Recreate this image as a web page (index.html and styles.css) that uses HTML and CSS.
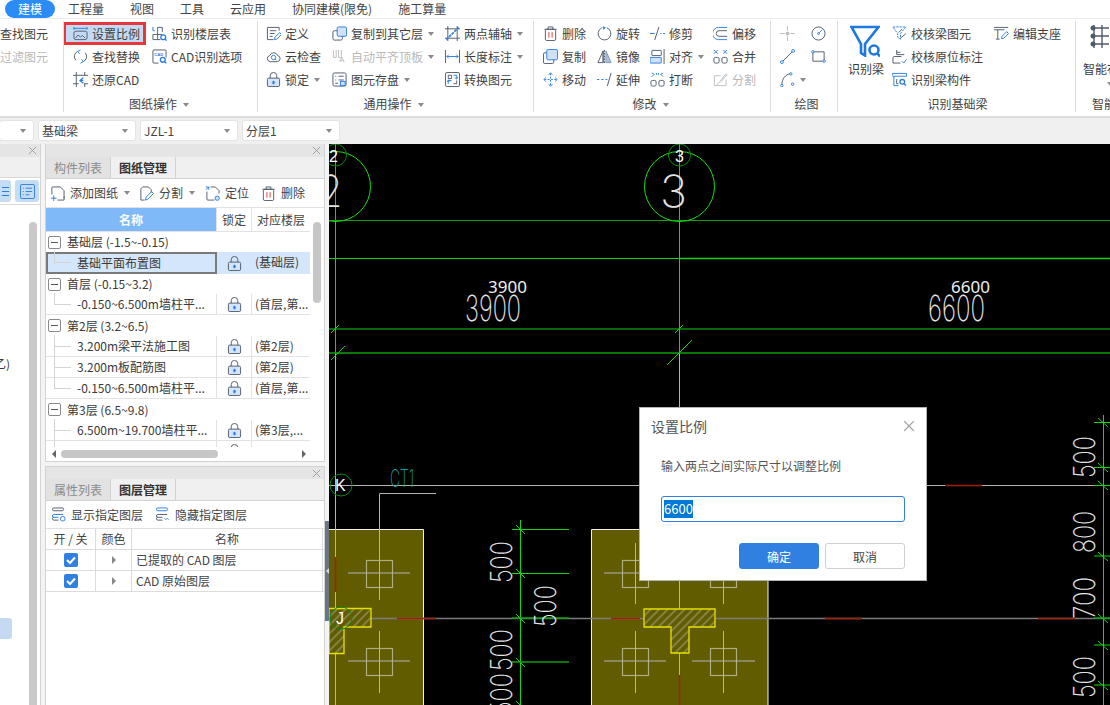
FILE: index.html
```html
<!DOCTYPE html>
<html lang="zh">
<head>
<meta charset="utf-8">
<title>设置比例</title>
<link rel="stylesheet" href="styles.css">
</head>
<body>
<svg class="defs" width="0" height="0" aria-hidden="true">
  <defs>
    <symbol id="i-scale" viewBox="0 0 16 16"><path class="b" d="M1 1v3M15 1v3M1 2.500h14"/><rect class="d" x="1" y="5.500" width="14" height="9" rx="2"/><path class="d" d="M2.500 13l3-3.500 2.500 2.500 2-2 3 3"/></symbol>
    <symbol id="i-replace" viewBox="0 0 16 16"><path class="d" d="M3 12A6 6 0 0 1 5 2.500"/><path class="b" d="M5 2.500L8 1M5 2.500L7 5"/><path class="d" d="M13 4a6 6 0 0 1-2 9.500"/><path class="b" d="M11 13.500L8 15M11 13.500L9 11"/></symbol>
    <symbol id="i-restore" viewBox="0 0 16 16"><path class="d" d="M3.500 0v16M12.500 0v4M0 3.500h16M0 12.500h6M12 12.500h4M12.500 12v4"/><path class="b2" d="M11 6L7.500 9 11 12M8 9h3"/></symbol>
    <symbol id="i-floor" viewBox="0 0 16 16"><path class="b" d="M1 1v4h2"/><path class="d" d="M6 1.500h5M6 1.500v13M11 1.500v5M1 9h10M1 9v5.500h8"/><circle class="b2" cx="12" cy="12" r="2.600"/><path class="b2" d="M14 14l1.600 1.600"/></symbol>
    <symbol id="i-cad" viewBox="0 0 16 16"><path class="d" d="M7 15H2a1 1 0 0 1-1-1V2a1 1 0 0 1 1-1h12a1 1 0 0 1 1 1v7"/><text class="tiny" x="2.500" y="7">CAD</text><circle class="b2" cx="11.500" cy="11.500" r="2.600"/><path class="b2" d="M13.500 13.500l1.800 1.800"/></symbol>
    <symbol id="i-define" viewBox="0 0 16 16"><path class="d" d="M14 5V1.500H1.500v13H8"/><path class="d" d="M4 5h7M4 8h5M4 11h3"/><path class="b" d="M9 14.500l.5-2.500 5-5 2 2-5 5z"/></symbol>
    <symbol id="i-cloud" viewBox="0 0 16 16"><path class="d" d="M4.500 13.500a3.300 3.300 0 0 1-.5-6.500 4.500 4.500 0 0 1 8.500 0 3.300 3.300 0 0 1-.5 6.500z"/><circle class="b" cx="8" cy="9" r="2.300"/><path class="b" d="M9.700 10.700l1.300 1.300"/></symbol>
    <symbol id="i-lock" viewBox="0 0 16 16"><rect class="lockbody" x="1.500" y="6.500" width="13" height="9" rx="1.500"/><path class="d" d="M4.500 6.500V4a3.500 3.500 0 0 1 7 0v2.500"/><path class="lockdot" d="M8 9l2 2.200H9v1.800H7v-1.800H6z"/></symbol>
    <symbol id="i-copyto" viewBox="0 0 16 16"><rect class="d" x="1" y="5" width="10" height="10" rx="1.500"/><rect class="fillb" x="5.500" y="1" width="10" height="10" rx="1.500"/></symbol>
    <symbol id="i-level" viewBox="0 0 16 16"><path class="g" d="M1.500 1v8h3V1M7 1v8h3V1"/><path class="g" d="M8 14l2.500-5 2.500 5M9 12.500h3"/></symbol>
    <symbol id="i-save" viewBox="0 0 16 16"><rect class="d" x="1" y="1" width="14" height="14" rx="1.500"/><path class="d" d="M3.500 4.500h1M7 4.500h5.500M3.500 8.500h1M7 8.500h5.500M3.500 12h3"/><rect class="fillb" x="9" y="10" width="5" height="4.500"/></symbol>
    <symbol id="i-axis" viewBox="0 0 16 16"><path class="d" d="M3 0v16M13 0v16M0 3h16M0 13h16"/><path class="b3" d="M1.500 14.500L14.500 1.500"/></symbol>
    <symbol id="i-dim" viewBox="0 0 16 16"><path class="d" d="M.5 1v14M15.500 1v14"/><path class="b" d="M2 8h12M4 6L2 8l2 2M12 6l2 2-2 2"/></symbol>
    <symbol id="i-convert" viewBox="0 0 16 16"><rect class="d" x=".5" y=".5" width="15" height="15" rx="1.500"/><path class="d" d="M3.500 3.500h3.500v3.500h-3.500zM9 12.500h3.500V9"/><path class="b" d="M9 3.500h3.500V7M10.500 6l2 1.500 1-2M3.500 12.500V9H7M5.500 10l-2-1.500-1 2"/></symbol>
    <symbol id="i-del" viewBox="0 0 16 16"><path class="d" d="M1.500 3.500h13M5.500 3.500V1h5v2.500"/><rect class="d" x="2.500" y="3.500" width="11" height="12" rx="1.500"/><path class="r" d="M6.300 6.500v6M9.700 6.500v6"/></symbol>
    <symbol id="i-copy" viewBox="0 0 16 16"><rect class="d" x=".5" y="4" width="11" height="11.500" rx="1.500"/><rect class="fillb" x="4" y=".5" width="11.500" height="11" rx="1.500"/></symbol>
    <symbol id="i-move" viewBox="0 0 16 16"><path class="b" d="M8 1.500v13M1.500 8h13" stroke-dasharray="2 1.500"/><path class="b" d="M6 3l2-2.200L10 3M6 13l2 2.200 2-2.200M3 6L.8 8 3 10M13 6l2.200 2L13 10"/></symbol>
    <symbol id="i-rotate" viewBox="0 0 16 16"><path class="d" d="M5 2A6.800 6.800 0 1 0 10.500 1.800"/><path class="b2" d="M6 1l2.200.8L6.800 3.500"/></symbol>
    <symbol id="i-mirror" viewBox="0 0 16 16"><path class="d" d="M6.500 2L1 14.500h5.500zM6.500 14.500V2"/><path class="fillg" d="M9.500 2L15 14.500H9.500z"/><path class="d" d="M8 1v15" stroke-dasharray="2 1"/></symbol>
    <symbol id="i-extend" viewBox="0 0 16 16"><path class="b" d="M0 8h2.500M4.500 8h2.500M9 8h2"/><path class="d" d="M11 15L15 1"/></symbol>
    <symbol id="i-trim" viewBox="0 0 16 16"><path class="b" d="M0 8h5M11 8h1.500M14 8h2"/><path class="d" d="M5 15L9.500 1"/></symbol>
    <symbol id="i-align" viewBox="0 0 16 16"><rect class="d" x="2" y="1.500" width="10" height="5.500" rx=".5"/><rect class="fillb" x="0" y="9" width="12" height="6" rx=".5"/><path class="d" d="M15 0v16"/></symbol>
    <symbol id="i-break" viewBox="0 0 16 16"><path class="b" d="M2 5l2.500-2.500L2 1M14 5l-2.500-2.500L14 1M7 1v2M9 1v2"/><rect class="d" x="1" y="9" width="5.500" height="6" rx="1.500"/><rect class="d" x="9.500" y="9" width="5.500" height="6" rx="1.500"/></symbol>
    <symbol id="i-offset" viewBox="0 0 16 16"><path class="b" d="M15 1.500H6a6 6 0 0 0 0 13h9"/><path class="d" d="M15 5H6.500a3 3 0 0 0 0 6H15"/></symbol>
    <symbol id="i-merge" viewBox="0 0 16 16"><path class="b" d="M1 1l2 2-2 2M5 1L3 3l2 2M11 1l2 2-2 2M15 1l-2 2 2 2"/><rect class="d" x="1" y="9" width="5.500" height="6" rx="1.500"/><rect class="d" x="9.500" y="9" width="5.500" height="6" rx="1.500"/></symbol>
    <symbol id="i-split" viewBox="0 0 16 16"><path class="g" d="M14 8v6.500H1.500V4H8M4 14L14 2l1 1-7 8"/></symbol>
    <symbol id="i-point" viewBox="0 0 16 16"><path class="g" d="M0 8h5M11 8h5M8 0v5M8 11v5"/><circle class="fillgd" cx="8" cy="8" r="2"/></symbol>
    <symbol id="i-circle" viewBox="0 0 16 16"><circle class="d" cx="8" cy="8" r="7"/><circle class="b" cx="8" cy="8" r="1"/><path class="b" d="M8.700 7.300L12 4"/></symbol>
    <symbol id="i-line" viewBox="0 0 16 16"><path class="d" d="M2.500 13.500l11-11"/><circle class="node" cx="2" cy="14" r="1.500"/><circle class="node" cx="14" cy="2" r="1.500"/></symbol>
    <symbol id="i-rect" viewBox="0 0 16 16"><path class="d" d="M2 3h12v10H2z"/><circle class="node" cx="2" cy="3" r="1.300"/><circle class="node" cx="14" cy="13" r="1.300"/></symbol>
    <symbol id="i-arc" viewBox="0 0 16 16"><path class="d" d="M2 14C2 7 6 2.500 11 2"/><circle class="node" cx="2" cy="14.500" r="1.300"/><circle class="node" cx="11.500" cy="2" r="1.300"/><circle class="node" cx="13.500" cy="13" r="1.300"/></symbol>
    <symbol id="i-funnel" viewBox="0 0 30 32"><path class="bigline" d="M1.500 2h27L15 19v11.500L11 28V19z"/><circle class="bigline" cx="24" cy="25" r="4.500"/><path class="bigline" d="M27.500 28.500l2.500 3"/></symbol>
    <symbol id="i-cbeam" viewBox="0 0 16 16"><path class="b" d="M1 1h14l-6 7v6L6 12V8z" stroke-dasharray="2.500 1"/><path class="d" d="M7 7l4-4M9 13l6-5"/></symbol>
    <symbol id="i-corig" viewBox="0 0 16 16"><path class="d" d="M5 1v5M5 6h8M5 3.500h4M1 15V9.500c0-1 .5-1.500 1.500-1.500H10M1 15h8"/><path class="b" d="M10.500 13l2 2L15.500 11"/></symbol>
    <symbol id="i-comp" viewBox="0 0 16 16"><path class="b" d="M.5 1.500h15M.5 4.500h15M.5 1.500v2M15.500 1.500v3M2 4.500v10h5"/><path class="d" d="M5 7.500v5h2"/><circle class="b2" cx="11" cy="10.500" r="2.500"/><path class="b2" d="M13 12.500l2 2"/></symbol>
    <symbol id="i-support" viewBox="0 0 16 16"><path class="d" d="M0 1.500h15M0 4h11M4 4v10M2 14h4"/><path class="b" d="M8 13.500l.5-2.500 5-5 2 2-5 5z"/></symbol>
    <symbol id="i-smart" viewBox="0 0 20 24"><path class="smart" d="M4 1v23M12 1v23M1 4h18M1 12h18M1 20h18"/><circle class="smartdot" cx="3" cy="4" r="2.500"/><circle class="smartdot" cx="3" cy="12" r="2.500"/><circle class="smartdot" cx="3" cy="20" r="2.500"/></symbol>
    <symbol id="i-add" viewBox="0 0 16 16"><path class="d" d="M4 1h7l4 4v10H8M2 9V2a1 1 0 0 1 1-1h1M15 11v2"/><path class="b" d="M1 13h6M4 10v6"/></symbol>
    <symbol id="i-cut" viewBox="0 0 16 16"><path class="d" d="M2 15V3l2-2h6l3 3v3M2 15h4"/><path class="b" d="M7 15l.5-3 6-6 2 2-6 6z"/></symbol>
    <symbol id="i-locate" viewBox="0 0 16 16"><path class="d" d="M6 1h5l4 4v3M2 6v8a1 1 0 0 0 1 1h7"/><path class="b" d="M1 4L4 1M1 1h3v3"/><circle class="fillb" cx="13" cy="13" r="2.300"/></symbol>
    <symbol id="i-lshow" viewBox="0 0 16 16"><rect class="d" x="1.500" y="1" width="12" height="3" rx="1.500"/><path class="b" d="M13 8H3a1.500 1.500 0 0 0 0 3h5"/><path class="d" d="M8 14H3a1.500 1.500 0 0 1 0-3"/><circle class="b" cx="12.500" cy="12.500" r="2.500"/></symbol>
    <symbol id="i-lhide" viewBox="0 0 16 16"><rect class="b" x="1.500" y="1" width="12" height="3" rx="1.500"/><path class="d" d="M13 8H3a1.500 1.500 0 0 0 0 3h5"/><path class="d" d="M8 14H3a1.500 1.500 0 0 1 0-3"/><path class="b" d="M10 12l1.500 1.500L13 12l1.500 1.500"/></symbol>
    <symbol id="i-list" viewBox="0 0 16 16"><rect class="b" x=".5" y=".5" width="15" height="15" rx="1.500"/><path class="b" d="M3 4.500h1M6 4.500h7M3 8h1M6 8h7M3 11.500h1M6 11.500h4"/></symbol>
    <symbol id="i-x" viewBox="0 0 10 10"><path class="x" d="M1 1l8 8M9 1l-8 8"/></symbol>
    <symbol id="i-check" viewBox="0 0 14 14"><rect class="chk" width="14" height="14" rx="2"/><path class="tick" d="M3 7l3 3 5-5.500"/></symbol>
    <pattern id="hatch" width="6" height="6" patternUnits="userSpaceOnUse" patternTransform="rotate(-45)"><rect width="6" height="6" class="hatch-bg"/><path class="hatch-line" d="M0 3h6"/></pattern>
  </defs>
</svg>

<div class="app">
  <nav class="menubar">
    <span class="pill">建模</span>
    <span class="menu m1">工程量</span>
    <span class="menu">视图</span>
    <span class="menu">工具</span>
    <span class="menu">云应用</span>
    <span class="menu">协同建模(限免)</span>
    <span class="menu">施工算量</span>
  </nav>

  <section class="ribbon">
    <div class="group g1">
      <div class="body">
        <div class="col">
          <div class="item">查找图元</div>
          <div class="item off">过滤图元</div>
        </div>
      </div>
    </div>

    <div class="group g2">
      <div class="body">
        <div class="col c79">
          <div class="item hl"><svg class="ic"><use href="#i-scale"/></svg>设置比例</div>
          <div class="item"><svg class="ic"><use href="#i-replace"/></svg>查找替换</div>
          <div class="item"><svg class="ic"><use href="#i-restore"/></svg>还原CAD</div>
        </div>
        <div class="col">
          <div class="item"><svg class="ic"><use href="#i-floor"/></svg>识别楼层表</div>
          <div class="item"><svg class="ic"><use href="#i-cad"/></svg>CAD识别选项</div>
        </div>
      </div>
      <div class="label">图纸操作<i class="caret"></i></div>
    </div>

    <div class="group g3">
      <div class="body">
        <div class="col c66">
          <div class="item"><svg class="ic"><use href="#i-define"/></svg>定义</div>
          <div class="item"><svg class="ic"><use href="#i-cloud"/></svg>云检查</div>
          <div class="item"><svg class="ic"><use href="#i-lock"/></svg>锁定<i class="caret"></i></div>
        </div>
        <div class="col c113">
          <div class="item"><svg class="ic"><use href="#i-copyto"/></svg>复制到其它层<i class="caret"></i></div>
          <div class="item off"><svg class="ic"><use href="#i-level"/></svg>自动平齐顶板<i class="caret"></i></div>
          <div class="item"><svg class="ic"><use href="#i-save"/></svg>图元存盘<i class="caret"></i></div>
        </div>
        <div class="col">
          <div class="item"><svg class="ic"><use href="#i-axis"/></svg>两点辅轴<i class="caret"></i></div>
          <div class="item"><svg class="ic"><use href="#i-dim"/></svg>长度标注<i class="caret"></i></div>
          <div class="item"><svg class="ic"><use href="#i-convert"/></svg>转换图元</div>
        </div>
      </div>
      <div class="label">通用操作<i class="caret"></i></div>
    </div>

    <div class="group g4">
      <div class="body">
        <div class="col c54">
          <div class="item"><svg class="ic"><use href="#i-del"/></svg>删除</div>
          <div class="item"><svg class="ic"><use href="#i-copy"/></svg>复制</div>
          <div class="item"><svg class="ic"><use href="#i-move"/></svg>移动</div>
        </div>
        <div class="col c53">
          <div class="item"><svg class="ic"><use href="#i-rotate"/></svg>旋转</div>
          <div class="item"><svg class="ic"><use href="#i-mirror"/></svg>镜像</div>
          <div class="item"><svg class="ic"><use href="#i-extend"/></svg>延伸</div>
        </div>
        <div class="col c63">
          <div class="item"><svg class="ic"><use href="#i-trim"/></svg>修剪</div>
          <div class="item"><svg class="ic"><use href="#i-align"/></svg>对齐<i class="caret"></i></div>
          <div class="item"><svg class="ic"><use href="#i-break"/></svg>打断</div>
        </div>
        <div class="col">
          <div class="item"><svg class="ic"><use href="#i-offset"/></svg>偏移</div>
          <div class="item"><svg class="ic"><use href="#i-merge"/></svg>合并</div>
          <div class="item off"><svg class="ic"><use href="#i-split"/></svg>分割</div>
        </div>
      </div>
      <div class="label">修改<i class="caret"></i></div>
    </div>

    <div class="group g5">
      <div class="body draw">
        <svg class="ic"><use href="#i-point"/></svg>
        <svg class="ic"><use href="#i-circle"/></svg>
        <svg class="ic"><use href="#i-line"/></svg>
        <svg class="ic"><use href="#i-rect"/></svg>
        <span class="arc"><svg class="ic"><use href="#i-arc"/></svg><i class="caret"></i></span>
      </div>
      <div class="label">绘图</div>
    </div>

    <div class="group g6">
      <div class="body">
        <div class="big">
          <svg class="bigic"><use href="#i-funnel"/></svg>
          <span>识别梁</span>
        </div>
        <div class="col c102">
          <div class="item"><svg class="ic"><use href="#i-cbeam"/></svg>校核梁图元</div>
          <div class="item"><svg class="ic"><use href="#i-corig"/></svg>校核原位标注</div>
          <div class="item"><svg class="ic"><use href="#i-comp"/></svg>识别梁构件</div>
        </div>
        <div class="col">
          <div class="item"><svg class="ic"><use href="#i-support"/></svg>编辑支座</div>
        </div>
      </div>
      <div class="label">识别基础梁</div>
    </div>

    <div class="group g7">
      <div class="body">
        <div class="big smartbtn">
          <svg class="smartic"><use href="#i-smart"/></svg>
          <span>智能布置</span>
          <i class="caret"></i>
        </div>
      </div>
      <div class="label">智能布置</div>
    </div>
  </section>

  <div class="selectors">
    <div class="sel s0"><i class="caret"></i></div>
    <div class="sel">基础梁<i class="caret"></i></div>
    <div class="sel">JZL-1<i class="caret"></i></div>
    <div class="sel">分层1<i class="caret"></i></div>
  </div>

  <main class="main">
    <aside class="leftpanel">
      <div class="phead"><svg class="px"><use href="#i-x"/></svg></div>
      <div class="ltabs"></div>
      <div class="ltools">
        <span class="lbtn partial"><span class="lbars"></span></span>
        <span class="lbtn"><svg class="ic"><use href="#i-list"/></svg></span>
      </div>
      <div class="lbody">
        <span class="ltext">乙)</span>
        <span class="lsel"></span>
        <span class="lscroll"></span>
      </div>
    </aside>

    <div class="midcol">
      <section class="panel upper">
        <div class="phead"><svg class="px"><use href="#i-x"/></svg></div>
        <div class="tabs"><span class="tab">构件列表</span><span class="tab on">图纸管理</span></div>
        <div class="tools">
          <span class="tool t-add"><svg class="ic"><use href="#i-add"/></svg>添加图纸<i class="caret"></i></span>
          <span class="tool t-cut"><svg class="ic"><use href="#i-cut"/></svg>分割<i class="caret"></i></span>
          <span class="tool t-loc"><svg class="ic"><use href="#i-locate"/></svg>定位</span>
          <span class="tool"><svg class="ic"><use href="#i-del"/></svg>删除</span>
        </div>
        <div class="treewrap">
          <div class="tree">
            <div class="row head"><span class="h1">名称</span><span>锁定</span><span>对应楼层</span></div>
            <div class="gr short"><i class="minus"></i>基础层 (-1.5~-0.15)</div>
            <div class="row leaf first sel-row"><span class="n">基础平面布置图</span><span class="lk"><svg class="ic"><use href="#i-lock"/></svg></span><span class="f">(基础层)</span></div>
            <div class="gr short"><i class="minus"></i>首层 (-0.15~3.2)</div>
            <div class="row leaf first"><span class="n">-0.150~6.500m墙柱平...</span><span class="lk"><svg class="ic"><use href="#i-lock"/></svg></span><span class="f">(首层,第...</span></div>
            <div class="gr"><i class="minus"></i>第2层 (3.2~6.5)</div>
            <div class="row leaf"><span class="n">3.200m梁平法施工图</span><span class="lk"><svg class="ic"><use href="#i-lock"/></svg></span><span class="f">(第2层)</span></div>
            <div class="row leaf"><span class="n">3.200m板配筋图</span><span class="lk"><svg class="ic"><use href="#i-lock"/></svg></span><span class="f">(第2层)</span></div>
            <div class="row leaf first"><span class="n">-0.150~6.500m墙柱平...</span><span class="lk"><svg class="ic"><use href="#i-lock"/></svg></span><span class="f">(首层,第...</span></div>
            <div class="gr"><i class="minus"></i>第3层 (6.5~9.8)</div>
            <div class="row leaf"><span class="n">6.500m~19.700墙柱平...</span><span class="lk"><svg class="ic"><use href="#i-lock"/></svg></span><span class="f">(第3层,...</span></div>
            <div class="row leaf"><span class="n"></span><span class="lk"><svg class="ic"><use href="#i-lock"/></svg></span><span class="f"></span></div>
          </div>
          <div class="vscroll"><span class="vthumb"></span></div>
        </div>
        <div class="hscroll">
          <i class="arrow al"></i><span class="hthumb"></span><i class="arrow ar"></i>
        </div>
      </section>

      <section class="panel lower">
        <div class="phead"><svg class="px"><use href="#i-x"/></svg></div>
        <div class="tabs"><span class="tab">属性列表</span><span class="tab on">图层管理</span></div>
        <div class="tools ltool">
          <span class="tool t-show"><svg class="ic"><use href="#i-lshow"/></svg>显示指定图层</span>
          <span class="tool"><svg class="ic"><use href="#i-lhide"/></svg>隐藏指定图层</span>
        </div>
        <div class="ltable">
          <div class="lrow"><span>开 / 关</span><span>颜色</span><span>名称</span></div>
          <div class="lrow"><span><svg class="cb"><use href="#i-check"/></svg></span><span><i class="arrow ar tri"></i></span><span class="nm">已提取的 CAD 图层</span></div>
          <div class="lrow"><span><svg class="cb"><use href="#i-check"/></svg></span><span><i class="arrow ar tri"></i></span><span class="nm">CAD 原始图层</span></div>
        </div>
      </section>
    </div>

    <div class="splitter"><span class="grip"><i class="arrow al griparrow"></i></span></div>

    <div class="canvas">
      <svg class="cad" viewBox="329 144 781 561" width="781" height="561">
        <!-- footing columns -->
        <path class="olive" d="M329 529.500H423.500V705H329z"/>
        <path class="olive" d="M591.500 529.500H768V705H591.500z"/>
        <path class="w" d="M329 529.500H423.500V705"/>
        <path class="w" d="M591.500 705V529.500H768V705"/>

        <!-- grid lines -->
        <path class="w2" d="M335.500 353V705"/>
        <path class="w2" d="M679.500 353V705"/>
        <path class="red" d="M335.500 557V592M679.500 675V705"/>
        <path class="w2" d="M329 485.500H1110"/>
        <path class="red" d="M945 485.500H982"/>
        <path class="w3" d="M329 618.500H1110"/>
        <path class="red" d="M397 618.500H436M611 618.500H640M825 618.500H862M1038 618.500H1075"/>

        <path class="gl" d="M335.500 144V353M679.500 144V353"/>
        <path class="gd" d="M329 220.500H1110"/>
        <path class="gl" d="M329 258.500H1110"/>
        <path class="gl th" d="M680 258.500H1110"/>
        <path class="gl" d="M329 329H1110"/>
        <path class="gd th" d="M329 353H1110"/>
        <path class="gl" d="M331 333l8-8M331 360l14-14M675 333l8-8M667 365l25-25"/>
        <circle class="gc" cx="335.500" cy="186.500" r="35"/>
        <circle class="gc" cx="679.500" cy="186.500" r="35"/>
        <circle class="gdc" cx="335.500" cy="155" r="11"/>
        <circle class="gdc" cx="679.500" cy="155" r="11"/>
        <text class="lbl" x="329" y="162">2</text>
        <text class="lbl" x="675" y="162">3</text>
        <text class="cadt" x="320" y="207" textLength="22" lengthAdjust="spacingAndGlyphs" font-size="44">2</text>
        <text class="cadt" x="660" y="207" textLength="27" lengthAdjust="spacingAndGlyphs" font-size="44">3</text>

        <text class="smallt" x="488" y="293">3900</text>
        <text class="cadt" x="465" y="321" textLength="56" lengthAdjust="spacingAndGlyphs" font-size="36">3900</text>
        <text class="smallt" x="951" y="293">6600</text>
        <text class="cadt" x="928" y="321" textLength="57" lengthAdjust="spacingAndGlyphs" font-size="36">6600</text>

        <!-- K / J axis -->
        <circle class="gdc" cx="341" cy="485" r="11"/>
        <text class="lbl" x="335" y="491">K</text>
        <text class="ct" x="390" y="487" textLength="24" lengthAdjust="spacingAndGlyphs">CT1</text>
        <path class="w2" d="M436 493.500H379.500V600M348 573H410M348 661H410M379.500 631V693"/>
        <rect class="sq" x="366.500" y="560.500" width="26" height="27"/>
        <rect class="sq" x="366.500" y="648.500" width="26" height="27"/>
        <path class="yel" fill="url(#hatch)" d="M329 608.500H371V627H344V653.500H329z"/>
        <circle class="gdc" cx="341" cy="618" r="11"/>
        <text class="lbl" x="336" y="624">J</text>

        <!-- second column detail -->
        <rect class="sq" x="622.500" y="560.500" width="26" height="27"/>
        <rect class="sq" x="710.500" y="560.500" width="26" height="27"/>
        <rect class="sq" x="622.500" y="648.500" width="26" height="27"/>
        <rect class="sq" x="710.500" y="648.500" width="26" height="27"/>
        <path class="w2" d="M604 573H666M692 573H755M604 661H666M692 661H755M635.500 543V604M723.500 543V604M635.500 631V693M723.500 631V693"/>
        <path class="yel" fill="url(#hatch)" d="M644 609H715V627H689V653H671V627H644z"/>

        <!-- vertical dimensions -->
        <path class="gl" d="M520.500 520V705"/>
        <path class="gl" d="M512 529.500H569M512 573.500H569"/>
        <path class="gd th" d="M512 618H569M512 662H569"/>
        <path class="gl" d="M516 525l9 9M516 569l9 9M516 614l9 9M516 658l9 9M516 701l9 9"/>
        <text class="cadt" transform="translate(512 583) rotate(-90)" textLength="42" lengthAdjust="spacingAndGlyphs" font-size="30">500</text>
        <text class="cadt" transform="translate(556 627) rotate(-90)" textLength="42" lengthAdjust="spacingAndGlyphs" font-size="30">500</text>
        <text class="cadt" transform="translate(512 671) rotate(-90)" textLength="42" lengthAdjust="spacingAndGlyphs" font-size="30">500</text>
        <text class="cadt" transform="translate(512 715) rotate(-90)" textLength="42" lengthAdjust="spacingAndGlyphs" font-size="30">500</text>

        <path class="gl" d="M1103.500 415V705M1094 422.500H1110M1094 467.500H1110M1094 485.500H1110M1094 556H1110M1094 645H1110M1094 685H1110"/>
        <path class="gd th" d="M1094 618H1110"/>
        <path class="gl" d="M1098 418l10 9M1098 463l10 9M1098 481l10 9M1098 552l10 9M1098 614l10 9M1098 641l10 9M1098 681l10 9"/>
        <text class="cadt" transform="translate(1095 478) rotate(-90)" textLength="42" lengthAdjust="spacingAndGlyphs" font-size="30">500</text>
        <text class="cadt" transform="translate(1095 553) rotate(-90)" textLength="42" lengthAdjust="spacingAndGlyphs" font-size="30">800</text>
        <text class="cadt" transform="translate(1095 619) rotate(-90)" textLength="42" lengthAdjust="spacingAndGlyphs" font-size="30">700</text>
        <text class="cadt" transform="translate(1095 698) rotate(-90)" textLength="42" lengthAdjust="spacingAndGlyphs" font-size="30">500</text>
      </svg>

      <div class="dialog" role="dialog">
        <div class="dtitle">设置比例<svg class="dx"><use href="#i-x"/></svg></div>
        <p class="dtext">输入两点之间实际尺寸以调整比例</p>
        <div class="dinput"><span class="selected">6600</span></div>
        <div class="dbtns">
          <span class="btn primary">确定</span>
          <span class="btn">取消</span>
        </div>
      </div>
    </div>
  </main>
</div>
</body>
</html>
```

FILE: styles.css
```css
* { box-sizing: border-box; }
html, body { margin: 0; padding: 0; }
body {
  width: 1110px;
  height: 705px;
  overflow: hidden;
  background: #fff;
  color: #3a3a3a;
  font: 12px/18px "Noto Sans CJK SC", "Liberation Sans", sans-serif;
}
i { font-style: normal; }
.defs { position: absolute; }
.app { width: 1110px; height: 705px; display: flex; flex-direction: column; overflow: hidden; }

/* icon stroke classes */
.d, .b, .b2, .b3, .g, .r, .x, .smart, .bigline, .tick { fill: none; stroke-width: 1; }
.d { stroke: #4f5b6b; }
.b { stroke: #2b7de0; }
.b2 { stroke: #2b7de0; stroke-width: 1.4; }
.b3 { stroke: #2b7de0; stroke-width: 1.8; stroke-dasharray: 3 1; }
.g { stroke: #bdbdbd; }
.r { stroke: #e03c3c; }
.x { stroke: #9a9a9a; }
.fillb { fill: #cfe2fa; stroke: #2b7de0; }
.fillg { fill: #a9c3e6; stroke: #7f93ad; }
.fillgd { fill: #bdbdbd; }
.lockbody { fill: #d4e5fb; stroke: #4f5b6b; }
.lockdot { fill: #2b7de0; }
.node { fill: #fff; stroke: #2b7de0; }
.bigline { stroke: #1f78e0; stroke-width: 2.6; }
.smart { stroke: #4f5b6b; stroke-width: 1.4; }
.smartdot { fill: #4f5b6b; }
.chk { fill: #2f80e0; }
.tick { stroke: #fff; stroke-width: 2; }
.tiny { font: 700 4.4px "Liberation Sans", sans-serif; fill: #2b7de0; }

/* menu */
.menubar { height: 19px; flex: none; display: flex; align-items: flex-start; gap: 26px; border-bottom: 1px solid #ececec; font-size: 12px; line-height: 18px; color: #444; }
.pill { width: 50px; height: 18px; margin-left: 5px; border-radius: 9px; background: #2b8cf7; color: #fff; text-align: center; }
.menu { display: block; }
.m1 { margin-left: -13px; }

/* ribbon */
.ribbon { height: 99px; flex: none; display: flex; padding: 2px 0 4px; border-bottom: 2px solid #dcdcdc; background: #fff; }
.group { flex: none; display: flex; flex-direction: column; padding-top: 1px; border-right: 1px solid #dcdcdc; overflow: hidden; }
.body { height: 69px; display: flex; flex: none; }
.label { height: 22px; padding-top: 4px; line-height: 18px; text-align: center; color: #444; white-space: nowrap; }
.col { display: flex; flex-direction: column; flex: none; }
.c79 { width: 79px; }
.c66 { width: 66px; }
.c113 { width: 113px; }
.c54 { width: 54px; }
.c53 { width: 53px; }
.c63 { width: 63px; }
.c102 { width: 102px; }
.item { height: 23px; display: flex; align-items: center; white-space: nowrap; color: #3f3f3f; }
.item.off { color: #b9b9b9; }
.ic { width: 15px; height: 15px; flex: none; margin-right: 4px; }
.item.hl { margin-left: -7px; padding-left: 7px; width: 77px; height: 17px; margin-top: 3px; margin-bottom: 3px; background: #c3daf3; outline: 3px solid #e8373a; }
.caret { display: inline-block; width: 0; height: 0; margin-left: 5px; border-style: solid; border-width: 4px 3.5px 0; border-color: #8a8a8a transparent transparent; }
.label .caret { margin-left: 6px; vertical-align: 2px; }
.g1 { width: 64px; }
.g2 { width: 194px; padding-left: 9px; }
.g3 { width: 276px; padding-left: 8px; }
.g4 { width: 237px; padding-left: 9px; }
.g5 { width: 67px; padding-left: 9px; }
.g6 { width: 238px; padding-left: 10px; }
.g7 { width: 35px; border-right: 0; }
.g2 .label { padding-right: 12px; }
.g3 .label { padding-right: 12px; }
.g4 .label { padding-right: 12px; }
.g5 .label { padding-right: 4px; }
.g6 .label { padding-right: 8px; }
.g7 .label { padding-left: 16px; text-align: left; }
.draw { display: grid; grid-template-columns: 31px 20px; grid-auto-rows: 23px; align-items: center; }
.arc { display: flex; align-items: center; }
.arc .ic { margin-right: 0; }
.big { display: flex; flex-direction: column; align-items: flex-start; flex: none; width: 44px; }
.bigic { width: 30px; height: 32px; margin: 3px 0 3px 2px; flex: none; }
.big span { line-height: 18px; white-space: nowrap; }
.smartbtn { width: 48px; padding-left: 7px; }
.smartic { width: 20px; height: 24px; margin-top: 2px; margin-bottom: 12px; margin-left: 7px; flex: none; }
.smartbtn .caret { margin-left: 24px; margin-top: 4px; }

/* selectors */
.selectors { height: 26px; flex: none; display: flex; gap: 4px; padding-top: 2px; background: #f0f0f0; }
.sel { width: 98px; height: 21px; padding: 0 3px; display: flex; align-items: center; justify-content: space-between; background: #fff; border: 1px solid #e4e4e4; border-radius: 3px; line-height: 19px; color: #444; }
.sel .caret { margin-right: 4px; }
.s0 { width: 35px; margin-left: -1px; justify-content: flex-end; }

/* main */
.main { flex: 1; min-height: 0; display: flex; background: #f4f4f4; }
.phead { height: 13px; flex: none; display: flex; justify-content: flex-end; align-items: center; padding-right: 3px; background: #e5e5e5; }
.px { width: 9px; height: 9px; display: block; }

.leftpanel { width: 41px; flex: none; display: flex; flex-direction: column; border-right: 1px solid #d4d4d4; background: #fff; }
.ltabs { height: 21px; flex: none; background: #f0f0f0; border-bottom: 1px solid #d8d8d8; }
.ltools { height: 27px; flex: none; display: flex; align-items: center; justify-content: space-between; padding: 0 1px 0 0; border-bottom: 1px solid #d8d8d8; background: #fff; }
.lbtn { width: 24px; height: 22px; display: flex; align-items: center; justify-content: center; border-radius: 3px; background: #c6dcf5; }
.lbtn .ic { margin: 0; }
.partial { width: 11px; border-radius: 0 3px 3px 0; }
.lbars { width: 7px; height: 9px; border-top: 1px solid #2b7de0; border-bottom: 1px solid #2b7de0; background: linear-gradient(#2b7de0, #2b7de0) center / 100% 1px no-repeat; }
.lbody { flex: 1; position: relative; overflow: hidden; }
.ltext { position: absolute; left: -6px; top: 150px; }
.lsel { position: absolute; left: 0; top: 413px; width: 12px; height: 21px; background: #c5daf2; border-radius: 0 3px 3px 0; }
.lscroll { position: absolute; left: 29px; top: 17px; bottom: 0; width: 8px; background: #c9c9c9; border-radius: 4px 4px 0 0; }

.midcol { width: 280px; flex: none; margin-left: 4px; display: flex; flex-direction: column; gap: 4px; }
.panel { display: flex; flex-direction: column; background: #fff; border: 1px solid #d2d2d2; border-top: 0; }
.upper { height: 318px; flex: none; }
.lower { flex: 1; min-height: 0; border-top: 1px solid #d2d2d2; border-bottom: 0; }
.lower .phead { height: 12px; }
.tabs { height: 22px; flex: none; display: flex; background: #f0f0f0; border-bottom: 1px solid #d2d2d2; }
.tab { width: 65px; text-align: center; line-height: 21px; color: #8a8a8a; background: #e2e2e2; border-right: 1px solid #d2d2d2; }
.tab.on { color: #333; background: #f0f0f0; font-weight: 700; }
.tools { height: 28px; flex: none; display: flex; align-items: center; padding-left: 4px; color: #444; }
.tool { display: flex; align-items: center; white-space: nowrap; }
.tool .ic { margin-right: 5px; }
.tool .caret { margin-left: 6px; }
.t-add { margin-right: 9px; }
.t-cut { margin-right: 10px; }
.t-loc { margin-right: 12px; }

.treewrap { height: 240px; flex: none; display: flex; overflow: hidden; border-top: 1px solid #e2e2e2; }
.tree { width: 264px; flex: none; }
.row { display: grid; grid-template-columns: 171px 35px 58px; height: 21px; line-height: 20px; border-bottom: 1px solid #e2e2e2; white-space: nowrap; }
.row > span { display: block; overflow: hidden; border-right: 1px solid #e2e2e2; }
.row > span:last-child { border-right: 0; }
.head { height: 24px; line-height: 23px; text-align: center; color: #444; }
.h1 { background: #7fb9f8; color: #fff; font-weight: 700; }
.gr { height: 21px; display: flex; align-items: center; padding-left: 2px; white-space: nowrap; }
.gr.short { height: 20px; }
.minus { position: relative; width: 13px; height: 13px; margin-right: 6px; flex: none; border: 1px solid #8a8a8a; border-radius: 2px; }
.minus::after { content: ""; position: absolute; left: 2px; right: 2px; top: 5px; height: 1px; background: #555; }
.leaf { position: relative; }
.leaf::before { content: ""; position: absolute; left: 8px; top: -1px; bottom: 0; width: 16px; border-left: 1px solid #d4d4d4; }
.leaf::after { content: ""; position: absolute; left: 8px; top: 10px; width: 17px; height: 1px; background: #d4d4d4; }
.leaf.first::before { bottom: 10px; }
.n { padding-left: 31px; }
.lk { display: flex !important; align-items: center; justify-content: center; }
.lk .ic { margin: 0; }
.f { padding-left: 3px; }
.sel-row { height: 22px; background: #d3e6fb; border-bottom: 0; }
.sel-row .n { box-shadow: inset 0 0 0 2px #7a7a7a; border-right: 0; line-height: 21px; }
.sel-row .lk, .sel-row .f { border-right: 0; }

.vscroll { flex: 1; position: relative; }
.vthumb { position: absolute; left: 3px; top: 14px; width: 8px; height: 81px; border-radius: 4px; background: #c6c6c6; }
.hscroll { height: 14px; flex: none; display: flex; align-items: center; padding-left: 6px; }
.hthumb { width: 157px; height: 8px; margin-left: 5px; border-radius: 4px; background: #c6c6c6; }
.arrow { display: inline-block; width: 0; height: 0; border-style: solid; border-width: 4px 0 4px 4px; border-color: transparent transparent transparent #666; }
.arrow.al { border-width: 4px 4px 4px 0; border-color: transparent #666 transparent transparent; }
.hscroll .ar { margin-left: 84px; }
.arrow.tri { border-color: transparent transparent transparent #888; }

.ltool { height: 28px; padding-left: 5px; border-bottom: 1px solid #e0e0e0; }
.t-show { margin-right: 12px; }
.lrow { display: grid; grid-template-columns: 50px 36px 191px; height: 21px; line-height: 20px; border-bottom: 1px solid #dcdcdc; text-align: center; color: #444; }
.lrow > span { display: flex; align-items: center; justify-content: center; border-right: 1px solid #dcdcdc; }
.lrow .nm { justify-content: flex-start; padding-left: 4px; }
.cb { width: 14px; height: 14px; display: block; }

.splitter { width: 4px; flex: none; position: relative; background: #f4f4f4; }
.grip { position: absolute; left: 0; top: 377px; width: 4px; height: 100px; display: flex; align-items: center; justify-content: center; background: #6a7585; }
.arrow.griparrow { border-color: transparent #d8d8d8 transparent transparent; border-width: 3px 3px 3px 0; }

/* CAD canvas */
.canvas { flex: 1; min-width: 0; position: relative; overflow: hidden; background: #000; }
.cad { display: block; }
.olive { fill: #615c00; }
.w { fill: none; stroke: #f0f0f0; }
.w2 { fill: none; stroke: #b4b4b4; }
.w3 { fill: none; stroke: #7c7c7c; stroke-width: 1.5; }
.red { fill: none; stroke: #a81c0c; stroke-width: 1.5; }
.gl { fill: none; stroke: #14d414; }
.gd { fill: none; stroke: #0ca00c; }
.th { stroke-width: 1.5; }
.gc { fill: none; stroke: #14e014; }
.gdc { fill: none; stroke: #0a8a0a; }
.sq { fill: none; stroke: #b0ad80; stroke-width: 1.2; }
.yel { stroke: #e8e000; stroke-width: 1.3; }
.hatch-bg { fill: #615c00; }
.hatch-line { fill: none; stroke: #a8a68a; stroke-width: 1; }
.lbl { font: 16px "Liberation Sans", sans-serif; fill: #fff; }
.smallt { font: 17px "Noto Sans", "Liberation Sans", sans-serif; fill: #f0f0f0; }
.cadt { font-family: Inter, "Liberation Sans", sans-serif; font-weight: 200; fill: #e4e4e4; }
.ct { font: 200 24px Inter, "Liberation Sans", sans-serif; fill: #12a8a2; }

/* dialog */
.dialog { position: absolute; left: 310px; top: 263px; width: 288px; height: 174px; padding: 0 21px; background: #fff; border: 1px solid #b4b4b4; }
.dtitle { position: relative; margin: 8px 0 0 -10px; height: 20px; font-size: 14px; line-height: 20px; color: #555; }
.dx { position: absolute; right: -10px; top: 4px; width: 12px; height: 12px; }
.dtext { margin: 20px 0 0; height: 20px; line-height: 20px; color: #555; }
.dinput { margin-top: 20px; width: 244px; height: 26px; padding: 3px 2px; border: 1px solid #2f80e0; border-radius: 3px; }
.selected { display: inline-block; height: 18px; line-height: 18px; font-size: 13px; background: #0078d7; color: #fff; }
.dbtns { display: flex; justify-content: flex-end; gap: 6px; margin-top: 21px; }
.btn { width: 80px; height: 26px; text-align: center; line-height: 25px; border: 1px solid #cfcfcf; border-radius: 3px; color: #444; background: #fff; }
.btn.primary { background: #2f80e0; border-color: #2f80e0; color: #fff; }
```
